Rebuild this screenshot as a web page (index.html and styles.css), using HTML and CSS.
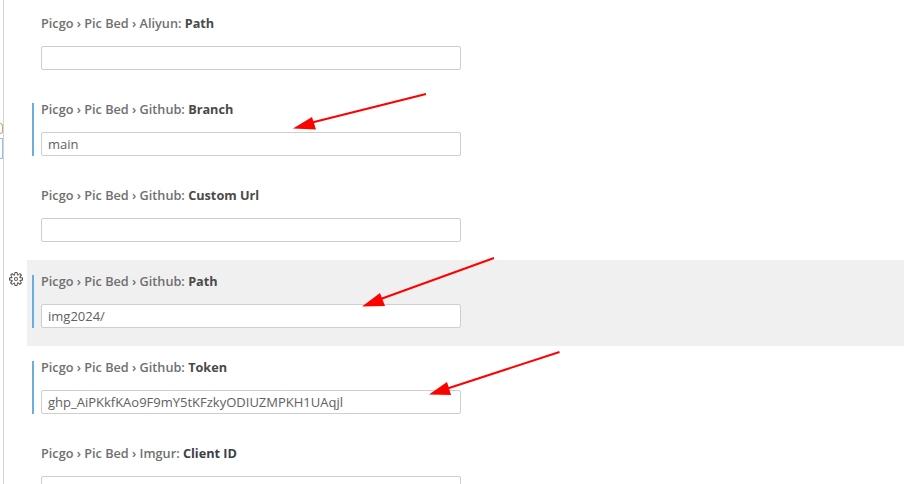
FILE: index.html
```html
<!DOCTYPE html>
<html lang="en">
<head>
  <meta charset="UTF-8">
  <meta name="viewport" content="width=device-width, initial-scale=1.0">
  <link rel="stylesheet" href="styles.css">
</head>
<body>
  <!-- left edge: sliver of the settings tree -->
  <div class="tree-edge">
    <span class="tree-badge"></span>
    <span class="tree-selected"></span>
  </div>

  <div class="settings-list">
    <div class="setting">
      <div class="setting-title">Picgo › Pic Bed › Aliyun: <strong>Path</strong></div>
      <input class="setting-input" type="text" value="">
    </div>
    <div class="setting modified">
      <div class="setting-title">Picgo › Pic Bed › Github: <strong>Branch</strong></div>
      <input class="setting-input" type="text" value="main">
    </div>
    <div class="setting">
      <div class="setting-title">Picgo › Pic Bed › Github: <strong>Custom Url</strong></div>
      <input class="setting-input" type="text" value="">
    </div>
    <div class="setting modified hovered">
      <svg class="gear" viewBox="0 0 16 16">
        <path fill="#555" fill-rule="evenodd" clip-rule="evenodd" d="M9.1 4.400L8.600 2H7.400l-.5 2.400-.7.3-2-1.300-.9.8 1.300 2-.2.7-2.400.5v1.200l2.400.5.3.8-1.300 2 .8.8 2-1.300.8.3.4 2.300h1.200l.5-2.400.8-.3 2 1.300.8-.8-1.300-2 .3-.8 2.300-.4V7.400l-2.400-.5-.3-.8 1.300-2-.8-.8-2 1.300-.7-.2zM9.400 1l.5 2.400L12 2.100l2 2-1.400 2.100 2.400.4v2.800l-2.400.5L14 12l-2 2-2.100-1.400-.5 2.400H6.600l-.5-2.400L4 13.900l-2-2 1.400-2.100L1 9.400V6.600l2.400-.5L2.100 4l2-2 2.100 1.400.4-2.400h2.800zm.6 7c0 1.100-.9 2-2 2s-2-.9-2-2 .9-2 2-2 2 .9 2 2zM8 9c.6 0 1-.4 1-1s-.4-1-1-1-1 .4-1 1 .4 1 1 1z"/>
      </svg>
      <div class="setting-title">Picgo › Pic Bed › Github: <strong>Path</strong></div>
      <input class="setting-input" type="text" value="img2024/">
    </div>
    <div class="setting modified">
      <div class="setting-title">Picgo › Pic Bed › Github: <strong>Token</strong></div>
      <input class="setting-input" type="text" value="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">
    </div>
    <div class="setting">
      <div class="setting-title">Picgo › Pic Bed › Imgur: <strong class="accent">Client ID</strong></div>
      <input class="setting-input" type="text" value="">
    </div>
  </div>

  <!-- red arrows drawn over the screenshot -->
  <svg class="arrows" width="904" height="484" viewBox="0 0 904 484">
    <g fill="#ff0000" stroke="#ff0000">
      <line x1="426" y1="94" x2="310" y2="123" stroke-width="2"/>
      <polygon points="293,128.500 312,117 316,129.500" stroke="none"/>
      <line x1="494" y1="258" x2="378" y2="300" stroke-width="2"/>
      <polygon points="362,306.500 380,293 385,306" stroke="none"/>
      <line x1="559.500" y1="352" x2="446" y2="389" stroke-width="2"/>
      <polygon points="429,394.500 447,382 451,395" stroke="none"/>
    </g>
  </svg>
</body>
</html>
```

FILE: styles.css
```css
* {
  margin: 0;
  padding: 0;
  box-sizing: border-box;
}

html, body {
  width: 904px;
  height: 484px;
  overflow: hidden;
}

body {
  position: relative;
  background: #fff;
  font-family: "Open Sans", "Noto Sans", sans-serif;
  font-size: 13px;
  color: #616161;
}

/* left edge */
.tree-edge {
  position: absolute;
  top: 0;
  left: 0;
  bottom: 0;
  width: 4px;
  border-right: 1px solid #d4d4d4;
}

.tree-badge {
  position: absolute;
  top: 123px;
  left: 0;
  width: 3px;
  height: 11px;
  border: 1px solid #c9a57e;
  border-left: none;
  border-radius: 0 6px 6px 0;
}

.tree-selected {
  position: absolute;
  top: 138px;
  left: 0;
  width: 3px;
  height: 21px;
  border: 1px solid #90c2f0;
  border-left: none;
  background: #fff;
}

/* settings */
.settings-list {
  display: flex;
  flex-direction: column;
  height: 484px;
  padding: 2px 0 0 27px;
  overflow: hidden;
}

.setting {
  position: relative;
  flex: none;
  height: 86px;
  padding: 12px 0 0 14px;
}

.setting.hovered {
  background: #f0f0f0;
}

.setting.modified::before {
  content: "";
  position: absolute;
  top: 15px;
  left: 5px;
  width: 2px;
  height: 53px;
  background: #66afe0;
}

.setting-title {
  height: 18px;
  line-height: 18px;
  font-size: 12.700px;
  font-weight: 600;
  color: #6f6f6f;
  white-space: nowrap;
}

.setting-title strong {
  font-weight: 700;
  color: #4a4a4a;
}

.setting-title strong.accent {
  color: #3a3f4a;
}

.setting-input {
  display: block;
  width: 420px;
  height: 24px;
  margin-top: 14px;
  padding: 0 6px;
  border: 1px solid #cecece;
  border-radius: 2px;
  background: #fff;
  font-family: inherit;
  font-size: 13px;
  color: #616161;
  outline: none;
}

/* floats in the margin left of the row */
.gear {
  position: absolute;
  top: 11px;
  left: -19px;
  width: 16px;
  height: 16px;
}

.arrows {
  position: absolute;
  top: 0;
  left: 0;
  pointer-events: none;
}
```
